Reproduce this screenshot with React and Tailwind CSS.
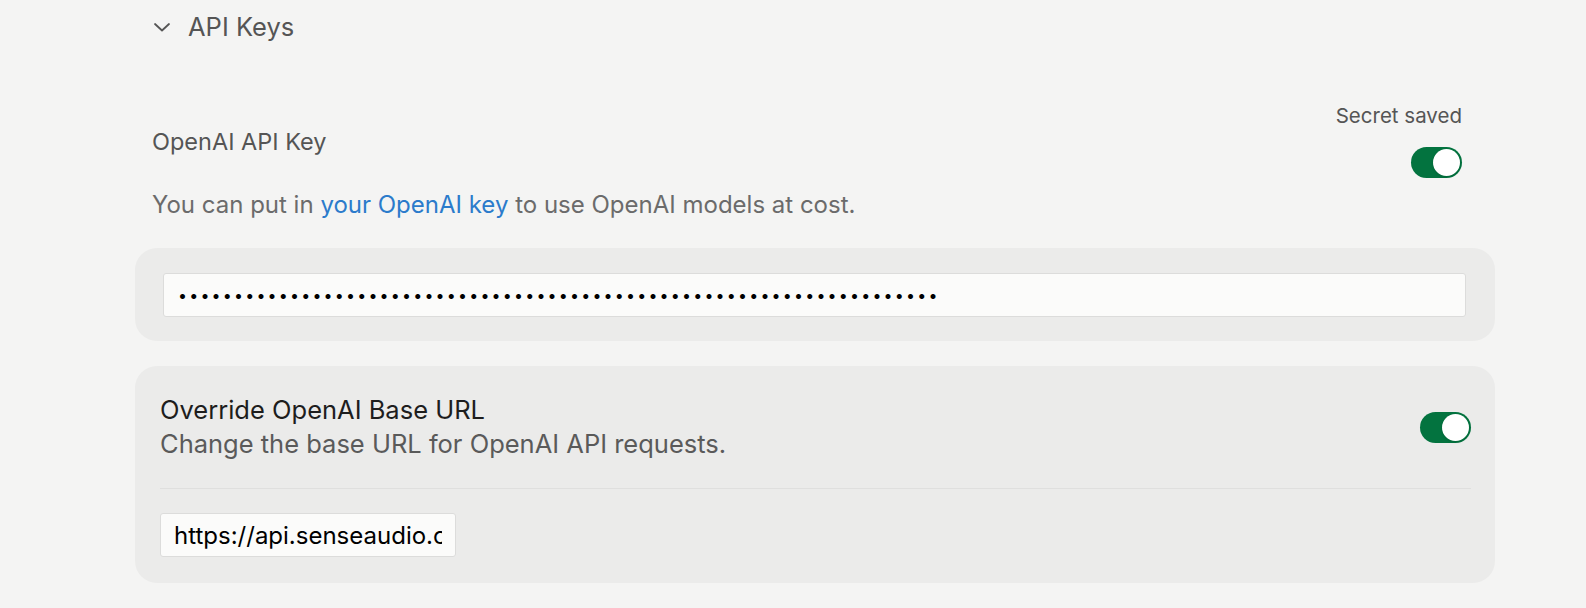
import React, { useState } from "react";

const Toggle = ({ on, onChange }) => {
  return (
    <button
      onClick={() => onChange(!on)}
      className={`relative h-[31px] w-[51px] shrink-0 rounded-full transition-colors ${
        on ? "bg-[#03733f]" : "bg-[#d4d4d3]"
      }`}
    >
      <span
        className={`absolute top-[2px] h-[27px] w-[27px] rounded-full bg-white shadow-sm transition-all ${
          on ? "left-[22px]" : "left-[2px]"
        }`}
      />
    </button>
  );
};

const App = () => {
  const [open, setOpen] = useState(true);
  const [useKey, setUseKey] = useState(true);
  const [overrideUrl, setOverrideUrl] = useState(true);
  const [apiKey, setApiKey] = useState(
    "sk-proj-xxxxxxxxxxxxxxxxxxxxxxxxxxxxxxxxxxxxxxxxxxxxxxxxxxxxxxxxxxxx"
  );
  const [baseUrl, setBaseUrl] = useState("https://api.senseaudio.cn/v1");

  return (
    <div
      className="min-h-screen bg-[#f4f4f3] pl-[135px] pt-[11px]"
      style={{ fontFamily: "Inter, 'Noto Sans', sans-serif" }}
    >
      <div className="w-[1360px]">
        {/* Section header */}
        <button
          onClick={() => setOpen((prev) => !prev)}
          className="flex h-[32px] items-center gap-[17px] pl-[18px] text-[25.5px] text-[#555555]"
        >
          <svg width="18" height="10" viewBox="0 0 18 10" fill="none">
            <path
              d="M2 2 L9 8.5 L16 2"
              stroke="#555555"
              strokeWidth="1.8"
              strokeLinecap="round"
              strokeLinejoin="round"
            />
          </svg>
          API Keys
        </button>

        {open && (
          <>
            {/* OpenAI key row */}
            <div className="mt-[59px] flex items-center justify-between pl-[17px] pr-[33px]">
              <div className="pt-[4px] text-[23.5px] leading-[28px] text-[#555555]">
                OpenAI API Key
              </div>
              <div className="flex flex-col items-end gap-[17px]">
                <div className="text-[20.5px] leading-[28px] text-[#555555]">
                  Secret saved
                </div>
                <Toggle on={useKey} onChange={setUseKey} />
              </div>
            </div>
            <p className="mt-[13px] pl-[17px] text-[24px] leading-[28px] text-[#6b6b6b]">
              You can put in{" "}
              <a href="#" className="text-[#2b7bcb]">
                your OpenAI key
              </a>{" "}
              to use OpenAI models at cost.
            </p>

            {/* Key input card */}
            <div className="mt-[29px] rounded-[22px] bg-[#ebebea] pb-[24px] pl-[28px] pr-[29px] pt-[25px]">
              <input
                type="password"
                value={apiKey}
                onChange={(e) => setApiKey(e.target.value)}
                className="h-[44px] w-full rounded-[3px] border border-[#dcdcdb] bg-[#fbfbfa] px-[14px] text-[16px] tracking-[2.2px] text-black outline-none"
              />
            </div>

            {/* Base URL card */}
            <div className="mt-[25px] rounded-[22px] bg-[#ebebea] pb-[26px] pl-[25px] pr-[24px] pt-[27px]">
              <div className="flex items-center justify-between">
                <div>
                  <div className="text-[25.5px] leading-[34px] text-[#1d1d1d]">
                    Override OpenAI Base URL
                  </div>
                  <div className="text-[25.5px] leading-[34px] text-[#5a5a5a]">
                    Change the base URL for OpenAI API requests.
                  </div>
                </div>
                <Toggle on={overrideUrl} onChange={setOverrideUrl} />
              </div>
              <div className="mt-[27px] h-px bg-[#dfdfde]" />
              <input
                type="text"
                value={baseUrl}
                onChange={(e) => setBaseUrl(e.target.value)}
                className="mt-[24px] h-[44px] w-[296px] rounded-[3px] border border-[#dcdcdb] bg-[#fbfbfa] px-[13px] text-[24px] text-black outline-none"
              />
            </div>
          </>
        )}
      </div>
    </div>
  );
};

export default App;
